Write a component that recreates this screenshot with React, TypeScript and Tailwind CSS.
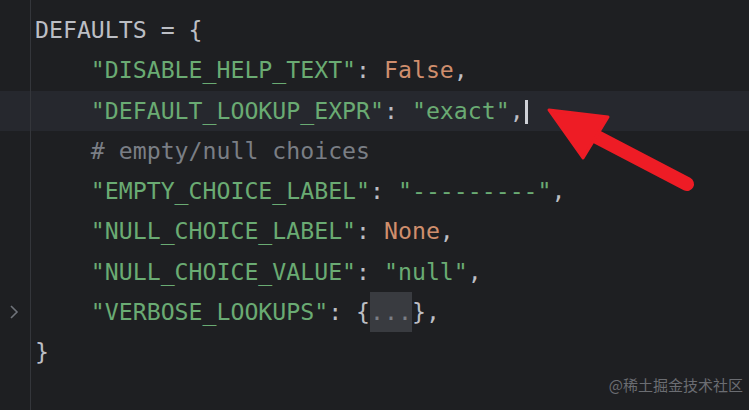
import { ReactNode } from "react";

const S = ({ children }: { children: ReactNode }) => <span className="text-[#6aab73]">{children}</span>;
const K = ({ children }: { children: ReactNode }) => <span className="text-[#cf8e6d]">{children}</span>;

const Row = ({
  children,
  active,
  fold,
  className = "h-[40.3px]",
}: {
  children?: ReactNode;
  active?: boolean;
  fold?: boolean;
  className?: string;
}) => (
  <div className={`flex ${className} ${active ? "bg-[#26282e]" : ""}`}>
    <div className="flex w-[31px] shrink-0 items-center justify-center border-r border-[#34363b] pr-[3px]">
      {fold && (
        <svg width="10" height="16" viewBox="0 0 10 16" fill="none">
          <path d="M2 2l6 6-6 6" stroke="#6f737a" strokeWidth="1.6" />
        </svg>
      )}
    </div>
    <div className="whitespace-pre pl-[4px] leading-[40.3px]">{children}</div>
  </div>
);

const App = () => (
  <div
    className="relative flex h-[410px] w-[749px] flex-col overflow-hidden bg-[#1e1f22] text-[23.2px] text-[#bcbec4]"
    style={{ fontFamily: '"DejaVu Sans Mono", "Liberation Mono", monospace' }}
  >
    <Row className="h-[10px]" />
    <Row>DEFAULTS = {"{"}</Row>
    <Row>
      {"    "}<S>"DISABLE_HELP_TEXT"</S>: <K>False</K>,
    </Row>
    <Row active>
      {"    "}<S>"DEFAULT_LOOKUP_EXPR"</S>: <S>"exact"</S>,
      <span className="ml-[1px] inline-block h-[24px] w-[3px] bg-[#ced0d6] align-middle" />
    </Row>
    <Row>
      <span className="text-[#7a7e85]">{"    "}# empty/null choices</span>
    </Row>
    <Row>
      {"    "}<S>"EMPTY_CHOICE_LABEL"</S>: <S>"---------"</S>,
    </Row>
    <Row>
      {"    "}<S>"NULL_CHOICE_LABEL"</S>: <K>None</K>,
    </Row>
    <Row>
      {"    "}<S>"NULL_CHOICE_VALUE"</S>: <S>"null"</S>,
    </Row>
    <Row fold>
      {"    "}<S>"VERBOSE_LOOKUPS"</S>: {"{"}
      <span className="inline-block h-[40.3px] bg-[#393b40] align-top text-[#7a7e85]">...</span>
      {"},"}
    </Row>
    <Row>{"}"}</Row>
    <Row className="flex-1" />

    <svg className="absolute left-0 top-0" width="749" height="410" viewBox="0 0 749 410">
      <line x1="595" y1="136" x2="687" y2="184" stroke="#ee1c25" strokeWidth="14" strokeLinecap="round" />
      <polygon points="549,110 608,117 583,158" fill="#ee1c25" stroke="#ee1c25" strokeWidth="3" strokeLinejoin="round" />
    </svg>

    <div
      className="absolute bottom-[14px] right-[6px] text-[15px] text-[#6b6d72]"
      style={{ fontFamily: '"Noto Sans CJK SC", "Noto Sans", sans-serif' }}
    >
      @稀土掘金技术社区
    </div>
  </div>
);

export default App;
